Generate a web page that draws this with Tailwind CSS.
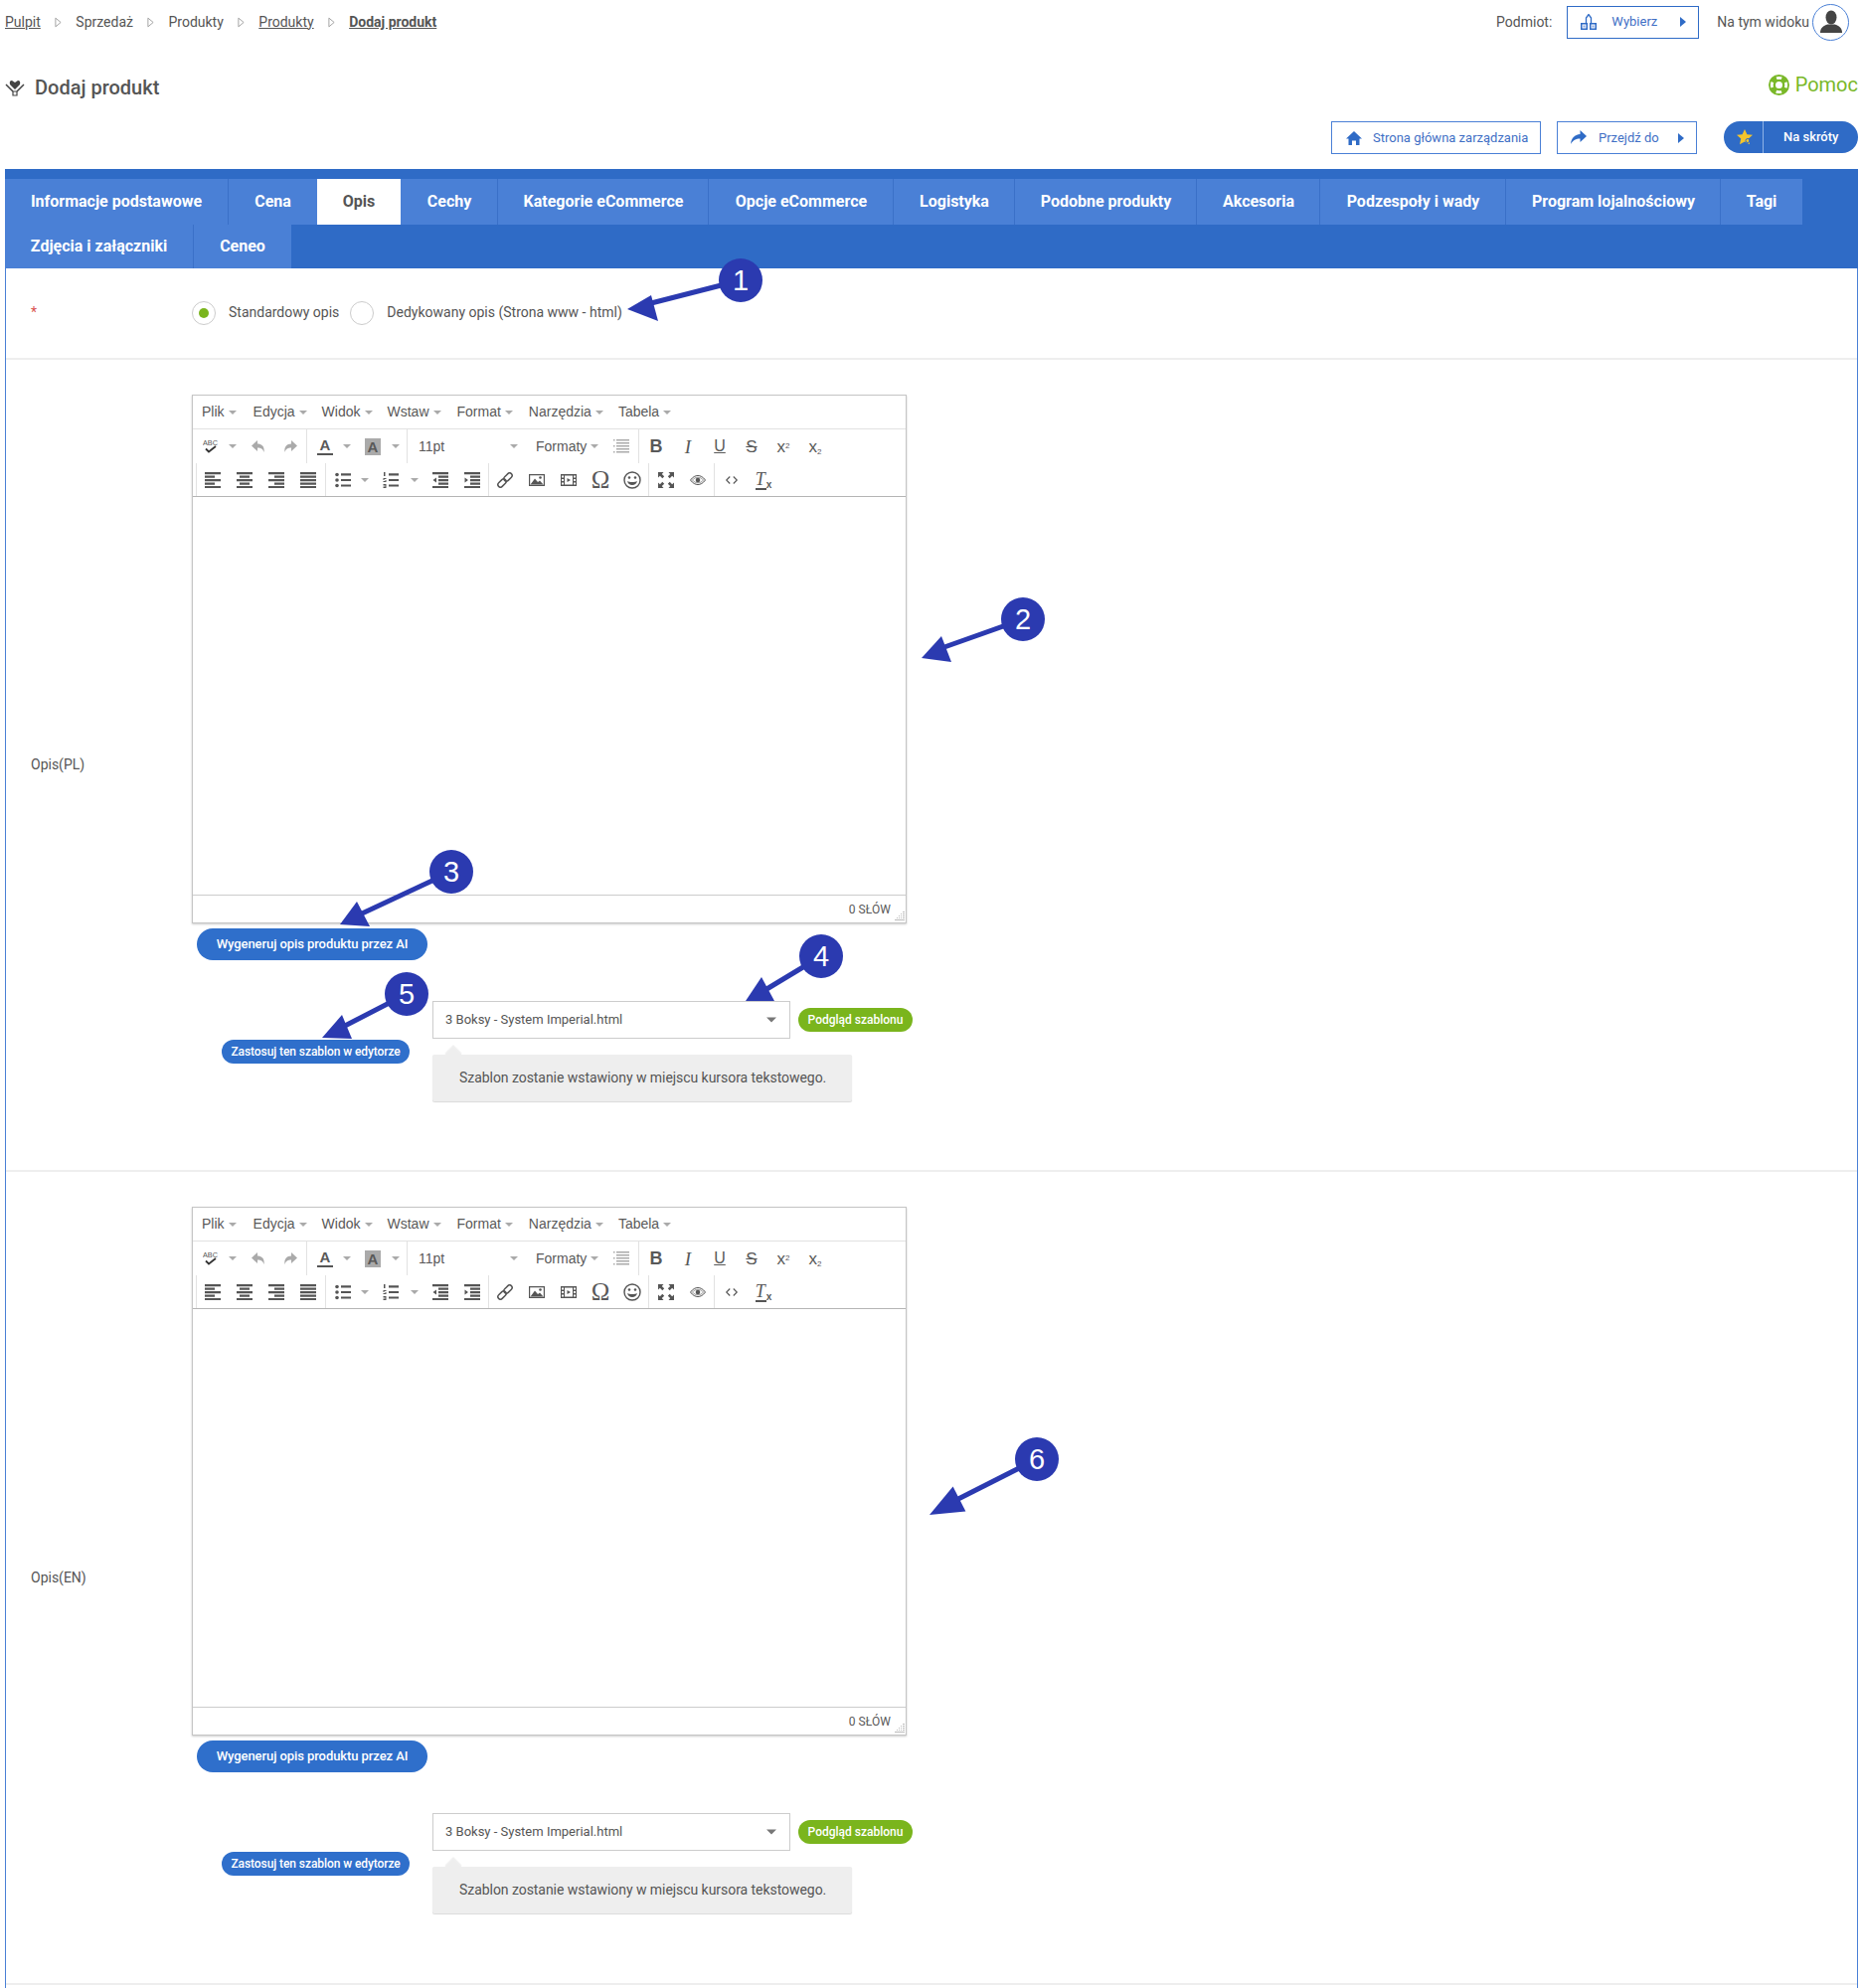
<!DOCTYPE html>
<html lang="pl">
<head>
<meta charset="utf-8">
<title>Dodaj produkt</title>
<script src="https://cdn.jsdelivr.net/npm/@tailwindcss/browser@4"></script>
</head>
<body class="relative h-[2000px] w-[1871px] overflow-hidden bg-white font-['Roboto',sans-serif] text-[#555]">
<svg class="hidden">
<symbol id="caret" viewBox="0 0 8 4"><path d="M0 0h8L4 4z"/></symbol>
<symbol id="bc" viewBox="0 0 8 11"><path d="M1 .5v10L7 5.500z" fill="#fff" stroke="#999"/></symbol>
<symbol id="grip" viewBox="0 0 10 9"><path d="M8 0h2v1H8zM6 2h1v1H6zM8 2h2v1H8zM4 4h1v1H4zM6 4h1v1H6zM8 4h2v1H8zM2 6h1v1H2zM4 6h1v1H4zM6 6h1v1H6zM8 6h2v1H8zM0 8h10v1H0z"/></symbol>
<symbol id="al" viewBox="0 0 16 16"><path d="M0 0h16v2.200H0zM0 3.500h10v2.200H0zM0 7h16v2.200H0zM0 10.500h10v2.200H0zM0 14h16v2H0z"/></symbol>
<symbol id="ac" viewBox="0 0 16 16"><path d="M0 0h16v2.200H0zM3 3.500h10v2.200H3zM0 7h16v2.200H0zM3 10.500h10v2.200H3zM0 14h16v2H0z"/></symbol>
<symbol id="ar" viewBox="0 0 16 16"><path d="M0 0h16v2.200H0zM6 3.500h10v2.200H6zM0 7h16v2.200H0zM6 10.500h10v2.200H6zM0 14h16v2H0z"/></symbol>
<symbol id="aj" viewBox="0 0 16 16"><path d="M0 0h16v2.200H0zM0 3.500h16v2.200H0zM0 7h16v2.200H0zM0 10.500h16v2.200H0zM0 14h16v2H0z"/></symbol>
<symbol id="ul" viewBox="0 0 16 16"><circle cx="2" cy="2.500" r="1.800"/><circle cx="2" cy="8" r="1.800"/><circle cx="2" cy="13.500" r="1.800"/><path d="M6 1.300h10v2.200H6zM6 6.900h10v2.200H6zM6 12.400h10v2.200H6z"/></symbol>
<symbol id="ol" viewBox="0 0 16 16"><path d="M1 0h1.500v4H1zM.5 6h3v1h-2v1h2v2h-3V9h2V8h-2zM.5 12h3v4h-3v-1h2v-.5h-2v-1h2V13h-2zM6 1.300h10v2.200H6zM6 6.900h10v2.200H6zM6 12.400h10v2.200H6z"/></symbol>
<symbol id="out" viewBox="0 0 16 16"><path d="M0 0h16v2.200H0zM6 3.500h10v2.200H6zM6 7h10v2.200H6zM6 10.500h10v2.200H6zM0 14h16v2H0zM4 5.500v5L.5 8z"/></symbol>
<symbol id="ind" viewBox="0 0 16 16"><path d="M0 0h16v2.200H0zM6 3.500h10v2.200H6zM6 7h10v2.200H6zM6 10.500h10v2.200H6zM0 14h16v2H0zM.5 5.500v5L4 8z"/></symbol>
<symbol id="link" viewBox="0 0 16 16"><g transform="rotate(-45 8 8)" fill="none" stroke="currentColor" stroke-width="1.500"><rect x="-1" y="5.500" width="9.500" height="5" rx="2.500"/><rect x="7.500" y="5.500" width="9.500" height="5" rx="2.500"/></g></symbol>
<symbol id="img" viewBox="0 0 16 16"><path d="M0 2h16v12H0zM1.200 3.200v9.600h13.600V3.200z" fill-rule="evenodd"/><path d="M1.500 12.500l4.500-6 3 3.500 2-1.500 3.500 4z"/><circle cx="11.500" cy="5.500" r="1.300"/></symbol>
<symbol id="med" viewBox="0 0 16 16"><path fill-rule="evenodd" d="M0 2h16v12H0zM4 3.500v9h8v-9zM1 3.500v2h2v-2zM1 7v2h2V7zM1 10.500v2h2v-2zM13 3.500v2h2v-2zM13 7v2h2V7zM13 10.500v2h2v-2z"/><path d="M6.500 6v4L10 8z"/></symbol>
<symbol id="sm" viewBox="0 0 18 18"><circle cx="9" cy="9" r="8" fill="none" stroke="currentColor" stroke-width="1.400"/><circle cx="6" cy="6.500" r="1.300"/><circle cx="12" cy="6.500" r="1.300"/><path d="M4 10c1.200 .6 3 1 5 1s3.800-.4 5-1c-.6 2.500-2.600 4-5 4s-4.400-1.500-5-4z"/></symbol>
<symbol id="fs" viewBox="0 0 16 16"><path d="M0 0h5.500L3.800 1.900 6.200 4.300 4.300 6.200 1.900 3.800 0 5.500zM16 0v5.500l-1.900-1.700-2.400 2.400-1.900-1.900 2.400-2.400L10.500 0zM0 16v-5.500l1.900 1.700 2.400-2.400 1.900 1.900-2.400 2.400L5.500 16zM16 16h-5.500l1.700-1.900-2.400-2.400 1.900-1.900 2.400 2.400 1.900-1.700z"/></symbol>
<symbol id="eye" viewBox="0 0 16 16"><path d="M.5 8C3 4.700 5.500 3.500 8 3.500S13 4.700 15.500 8C13 11.300 10.500 12.500 8 12.500S3 11.300 .5 8z" fill="none" stroke="currentColor"/><path d="M2.500 8C4 6 6 5.300 8 5.300S12 6 13.500 8C12 10 10 10.700 8 10.700S4 10 2.500 8z" fill="none" stroke="currentColor" stroke-width=".6"/><circle cx="8" cy="8" r="2.300"/></symbol>
<symbol id="code" viewBox="0 0 16 16"><path d="M6 4L2 8l4 4M10 4l4 4-4 4" fill="none" stroke="currentColor" stroke-width="1.300"/></symbol>
<symbol id="undo" viewBox="0 0 16 16"><path d="M7 2L1 7.500 7 13V9.500c3.500 0 5.300 1 6.500 4.500 .9-5.500-2-8.500-6.500-8.500z"/></symbol>
<symbol id="redo" viewBox="0 0 16 16"><path d="M9 2l6 5.500L9 13V9.500c-3.500 0-5.300 1-6.500 4.500-.9-5.500 2-8.500 6.500-8.500z"/></symbol>
<symbol id="spell" viewBox="0 0 16 16"><text x="0" y="6.800" font-family="Liberation Sans" font-size="7.500" textLength="15" lengthAdjust="spacingAndGlyphs">ABC</text><path d="M3 10.500l3 3 7-5.500" fill="none" stroke="#333" stroke-width="1.800"/></symbol>
<symbol id="lines" viewBox="0 0 16 16"><path d="M0 1h1.500v1.500H0zM3 1h13v1.500H3zM3 4h13v1.500H3zM0 7h1.500v1.500H0zM3 7h13v1.500H3zM3 10h13v1.500H3zM0 13h1.500v1.500H0zM3 13h13v1.500H3z"/></symbol>
</svg>

<div class="flex h-[44px] items-center justify-between pl-[5px] pr-[11px] text-[14px]">
  <nav class="flex items-center">
    <a class="underline">Pulpit</a><svg class="ml-[14px] mr-[14.500px] h-[11px] w-[7px]"><use href="#bc"/></svg>
    <span>Sprzedaż</span><svg class="ml-[14px] mr-[14.500px] h-[11px] w-[7px]"><use href="#bc"/></svg>
    <span>Produkty</span><svg class="ml-[14px] mr-[14.500px] h-[11px] w-[7px]"><use href="#bc"/></svg>
    <a class="underline">Produkty</a><svg class="ml-[14px] mr-[14.500px] h-[11px] w-[7px]"><use href="#bc"/></svg>
    <a class="font-bold underline">Dodaj produkt</a>
  </nav>
  <div class="flex items-center">
    <span>Podmiot:</span>
    <button class="relative ml-[15px] flex h-[33px] w-[133px] items-center border border-[#2f6bc6] pl-[13px] text-[13px] text-[#3f6fc5]">
      <svg class="h-[16px] w-[16px]" viewBox="0 0 16 16"><path d="M5.500 9V4L8 .5 10.500 4v5" fill="none" stroke="#2f6bc6" stroke-width="1.300"/><path fill-rule="evenodd" fill="#2f6bc6" d="M0 9h7v7H0zM1.500 10.500v4h4v-4zM9 9h7v7H9zM10.500 10.500v4h4v-4z"/><path d="M2.500 11.500h2v2h-2zM11.500 11.500h2v2h-2z" fill="#8aa8df"/></svg>
      <span class="ml-[15px]">Wybierz</span>
      <span class="ml-auto mr-[12px] h-0 w-0 border-y-[5px] border-l-[6px] border-y-transparent border-l-[#2f6bc6]"></span>
    </button>
    <span class="ml-[18px]">Na tym widoku</span>
    <span class="ml-[3px] flex h-[37px] w-[37px] items-center justify-center rounded-full border border-[#4a80d6]">
      <svg class="h-[24px] w-[22px] fill-[#444]" viewBox="0 0 22 24"><ellipse cx="11" cy="7.500" rx="5.500" ry="7"/><path d="M0 23c0-5 3-7 7.500-8.500h7C19 16 22 18 22 23z"/></svg>
    </span>
  </div>
</div>

<div class="flex h-[78px] items-center justify-between pl-[5px] pr-[2px]">
  <h1 class="flex items-center pt-[10px] text-[20px] font-medium">
    <svg class="mr-[10px] h-[18px] w-[20px]" viewBox="0 0 20 18"><path d="M10 11L5 6Q4 2 7 2L10 4 13 2Q16 2 15 6z" fill="#444"/><path d="M1 6L8 13M19 6L12 13" fill="none" stroke="#444" stroke-width="1.500"/><path d="M8 13h4v4H8z" fill="none" stroke="#444" stroke-width="1.200"/></svg>
    Dodaj produkt
  </h1>
  <div class="mt-[4px] flex items-center text-[20px] text-[#7ab829]">
    <svg class="mr-[6px] h-[21px] w-[21px]" viewBox="0 0 21 21"><circle cx="10.500" cy="10.500" r="10.500" fill="#7ab829"/><circle cx="10.500" cy="10.500" r="7.200" fill="none" stroke="#fff" stroke-width="2.800" stroke-dasharray="5.500 5.810" stroke-dashoffset="2.750" transform="rotate(-90 10.500 10.500)"/><circle cx="10.500" cy="10.500" r="3.500" fill="#fff"/></svg>
    Pomoc
  </div>
</div>

<div class="flex h-[48px] items-start justify-end pr-[2px] text-[13px]">
  <button class="flex h-[33px] w-[211px] items-center border border-[#4a80d6] pl-[14px] text-[#3f6fc5]">
    <svg class="h-[16px] w-[16px] fill-[#2f6bc6]" viewBox="0 0 16 16"><path d="M8 1l8 7.500h-2.500V15H10v-4.500H6V15H2.500V8.500H0z"/></svg>
    <span class="ml-[11px]">Strona główna zarządzania</span>
  </button>
  <button class="ml-[16px] flex h-[33px] w-[141px] items-center border border-[#4a80d6] pl-[13px] text-[#3f6fc5]">
    <svg class="h-[15px] w-[16px] fill-[#2f6bc6]" viewBox="0 0 16 15"><path d="M9.500 0L16 6l-6.500 6V8.500C5 8.500 2.500 10 0 14c.5-6 4-9.500 9.500-10z"/></svg>
    <span class="ml-[12px]">Przejdź do</span>
    <span class="ml-auto mr-[12px] h-0 w-0 border-y-[5px] border-l-[6px] border-y-transparent border-l-[#2f6bc6]"></span>
  </button>
  <div class="ml-[27px] flex h-[32px] w-[135px] items-center rounded-full bg-[#2f6bc6] font-medium text-white">
    <span class="flex h-full w-[40px] items-center justify-center border-r border-r-[#8fb2e6]">
      <svg class="ml-[2px] h-[16px] w-[16px]" viewBox="0 0 16 16"><path d="M8 0l2.400 5.200 5.600.6-4.200 3.800 1.200 5.600L8 12.400 3 15.200l1.200-5.600L0 5.800l5.600-.6z" fill="#f5c52c"/><circle cx="11" cy="11.500" r="2" fill="none" stroke="#2f6bc6"/></svg>
    </span>
    <span class="ml-[20px]">Na skróty</span>
  </div>
</div>

<main class="mx-[5px] h-[1830px] w-[1864px] border-x border-x-[#4a80d6]">
  <div class="-mx-px flex flex-wrap bg-[#2f6bc6] pr-[56px] pt-[10px] text-[16px] font-bold text-white">
    <a class="flex h-[46px] w-[225px] items-center justify-center border-r border-r-[#3a70c8] bg-[#4a80d6]">Informacje podstawowe</a>
    <a class="flex h-[46px] w-[89px] items-center justify-center bg-[#4a80d6]">Cena</a>
    <a class="flex h-[46px] w-[84px] items-center justify-center bg-white text-[#555]">Opis</a>
    <a class="flex h-[46px] w-[98px] items-center justify-center border-r border-r-[#3a70c8] bg-[#4a80d6] pl-px">Cechy</a>
    <a class="flex h-[46px] w-[212px] items-center justify-center border-r border-r-[#3a70c8] bg-[#4a80d6] pl-px">Kategorie eCommerce</a>
    <a class="flex h-[46px] w-[186px] items-center justify-center border-r border-r-[#3a70c8] bg-[#4a80d6] pl-px">Opcje eCommerce</a>
    <a class="flex h-[46px] w-[122px] items-center justify-center border-r border-r-[#3a70c8] bg-[#4a80d6] pl-px">Logistyka</a>
    <a class="flex h-[46px] w-[183px] items-center justify-center border-r border-r-[#3a70c8] bg-[#4a80d6] pl-px">Podobne produkty</a>
    <a class="flex h-[46px] w-[124px] items-center justify-center border-r border-r-[#3a70c8] bg-[#4a80d6] pl-px">Akcesoria</a>
    <a class="flex h-[46px] w-[187px] items-center justify-center border-r border-r-[#3a70c8] bg-[#4a80d6] pl-px">Podzespoły i wady</a>
    <a class="flex h-[46px] w-[216px] items-center justify-center border-r border-r-[#3a70c8] bg-[#4a80d6] pl-px">Program lojalnościowy</a>
    <a class="flex h-[46px] w-[82px] items-center justify-center bg-[#4a80d6]">Tagi</a>
    <a class="flex h-[44px] w-[190px] items-center justify-center border-r border-r-[#3a70c8] bg-[#4a80d6]">Zdjęcia i załączniki</a>
    <a class="flex h-[44px] w-[98px] items-center justify-center bg-[#4a80d6]">Ceneo</a>
  </div>

  <section class="flex h-[92px] items-center border-b-2 border-b-[#eee] pb-px text-[14px]">
    <span class="w-[187px] pl-[25px] text-[#d9534f]">*</span>
    <span class="flex h-[24px] w-[24px] items-center justify-center rounded-full border border-[#ccc]"><span class="h-[10px] w-[10px] rounded-full bg-[#7ab51d]"></span></span>
    <span class="ml-[13px]">Standardowy opis</span>
    <span class="ml-[11px] h-[24px] w-[24px] rounded-full border border-[#ccc]"></span>
    <span class="ml-[13px]">Dedykowany opis (Strona www - html)</span>
  </section>

  <section class="flex h-[817px] items-center border-b-2 border-b-[#eee]">
    <div class="w-[187px] pl-[25px] text-[14px]">Opis(PL)</div>
    <div class="flex h-full flex-col pt-[35px]">
      <div class="relative flex h-[532px] w-[719px] flex-col border border-[#c5c5c5] shadow-[0_1px_2px_rgba(0,0,0,0.2)] font-['Liberation_Sans',sans-serif] text-[#595959]">
        <div class="flex h-[34px] shrink-0 items-center border-b border-b-[#e2e2e2] pl-[9px] text-[14px]">
          <span>Plik</span><svg class="ml-[4px] h-[4px] w-[8px] fill-[#aaa]"><use href="#caret"/></svg>
          <span class="ml-[17px]">Edycja</span><svg class="ml-[4px] h-[4px] w-[8px] fill-[#aaa]"><use href="#caret"/></svg>
          <span class="ml-[15px]">Widok</span><svg class="ml-[4px] h-[4px] w-[8px] fill-[#aaa]"><use href="#caret"/></svg>
          <span class="ml-[15px]">Wstaw</span><svg class="ml-[4px] h-[4px] w-[8px] fill-[#aaa]"><use href="#caret"/></svg>
          <span class="ml-[16px]">Format</span><svg class="ml-[4px] h-[4px] w-[8px] fill-[#aaa]"><use href="#caret"/></svg>
          <span class="ml-[16px]">Narzędzia</span><svg class="ml-[4px] h-[4px] w-[8px] fill-[#aaa]"><use href="#caret"/></svg>
          <span class="ml-[15px]">Tabela</span><svg class="ml-[4px] h-[4px] w-[8px] fill-[#aaa]"><use href="#caret"/></svg>
        </div>
        <div class="flex h-[34px] shrink-0 items-center pl-[2px]">
          <span class="flex w-[32px] justify-center"><svg class="h-[16px] w-[16px] fill-[#555]"><use href="#spell"/></svg></span>
          <span class="flex w-[12px] justify-center"><svg class="h-[4px] w-[8px] fill-[#aaa]"><use href="#caret"/></svg></span>
          <span class="ml-[4px] flex w-[32px] justify-center"><svg class="h-[16px] w-[16px] fill-[#aaa]"><use href="#undo"/></svg></span>
          <span class="flex w-[32px] justify-center"><svg class="h-[16px] w-[16px] fill-[#aaa]"><use href="#redo"/></svg></span>
          <span class="h-full w-px bg-[#e2e2e2]"></span>
          <span class="ml-[2px] flex w-[32px] flex-col items-center"><span class="w-[16px] border-b-2 border-b-[#555] text-center text-[15px] font-bold leading-[16px]">A</span></span>
          <span class="flex w-[12px] justify-center"><svg class="h-[4px] w-[8px] fill-[#aaa]"><use href="#caret"/></svg></span>
          <span class="ml-[4px] flex w-[32px] justify-center"><span class="h-[17px] w-[16px] bg-[#aaa] text-center text-[15px] font-bold leading-[17px]">A</span></span>
          <span class="flex w-[14px] justify-center"><svg class="h-[4px] w-[8px] fill-[#aaa]"><use href="#caret"/></svg></span>
          <span class="ml-[4px] h-full w-px bg-[#e2e2e2]"></span>
          <span class="flex w-[115px] items-center pl-[11px] pr-[4px] text-[14px]">11pt<svg class="ml-auto h-[4px] w-[8px] fill-[#aaa]"><use href="#caret"/></svg></span>
          <span class="flex w-[84px] items-center pl-[14px] text-[14px]">Formaty<svg class="ml-[4px] h-[4px] w-[8px] fill-[#aaa]"><use href="#caret"/></svg></span>
          <span class="flex w-[32px] justify-center"><svg class="h-[16px] w-[16px] fill-[#aaa]"><use href="#lines"/></svg></span>
          <span class="ml-px h-full w-px bg-[#e2e2e2]"></span>
          <span class="ml-px flex w-[32px] justify-center text-[18px] font-bold leading-none">B</span>
          <span class="flex w-[32px] justify-center font-['Liberation_Serif',serif] text-[19px] italic leading-none">I</span>
          <span class="flex w-[32px] justify-center text-[16px] leading-none underline">U</span>
          <span class="flex w-[32px] justify-center text-[17px] leading-none line-through">S</span>
          <span class="w-[32px] text-center text-[17px] leading-none">x<sup class="text-[8px]">2</sup></span>
          <span class="w-[32px] text-center text-[17px] leading-none">x<sub class="text-[8px]">2</sub></span>
        </div>
        <div class="flex h-[34px] shrink-0 items-center border-b border-b-[#b5b5b5] pl-[3px]">
          <span class="h-full w-px bg-[#e2e2e2]"></span>
          <span class="flex w-[32px] justify-center"><svg class="h-[16px] w-[16px] fill-[#555]"><use href="#al"/></svg></span>
          <span class="flex w-[32px] justify-center"><svg class="h-[16px] w-[16px] fill-[#555]"><use href="#ac"/></svg></span>
          <span class="flex w-[32px] justify-center"><svg class="h-[16px] w-[16px] fill-[#555]"><use href="#ar"/></svg></span>
          <span class="flex w-[32px] justify-center"><svg class="h-[16px] w-[16px] fill-[#555]"><use href="#aj"/></svg></span>
          <span class="ml-px h-full w-px bg-[#e2e2e2]"></span>
          <span class="ml-px flex w-[32px] justify-center"><svg class="h-[16px] w-[16px] fill-[#555]"><use href="#ul"/></svg></span>
          <span class="flex w-[12px] justify-center"><svg class="h-[4px] w-[8px] fill-[#aaa]"><use href="#caret"/></svg></span>
          <span class="ml-[4px] flex w-[32px] justify-center"><svg class="h-[16px] w-[16px] fill-[#555]"><use href="#ol"/></svg></span>
          <span class="flex w-[16px] justify-center"><svg class="h-[4px] w-[8px] fill-[#aaa]"><use href="#caret"/></svg></span>
          <span class="ml-[2px] flex w-[32px] justify-center"><svg class="h-[16px] w-[16px] fill-[#555]"><use href="#out"/></svg></span>
          <span class="flex w-[32px] justify-center"><svg class="h-[16px] w-[16px] fill-[#555]"><use href="#ind"/></svg></span>
          <span class="h-full w-px bg-[#e2e2e2]"></span>
          <span class="flex w-[32px] justify-center text-[#555]"><svg class="h-[16px] w-[16px]"><use href="#link"/></svg></span>
          <span class="flex w-[32px] justify-center"><svg class="h-[16px] w-[16px] fill-[#555]"><use href="#img"/></svg></span>
          <span class="flex w-[32px] justify-center"><svg class="h-[16px] w-[16px] fill-[#555]"><use href="#med"/></svg></span>
          <span class="flex w-[32px] justify-center font-['Liberation_Serif',serif] text-[25px] leading-none">Ω</span>
          <span class="flex w-[32px] justify-center text-[#555]"><svg class="h-[18px] w-[18px] fill-[#555]"><use href="#sm"/></svg></span>
          <span class="h-full w-px bg-[#e2e2e2]"></span>
          <span class="ml-px flex w-[32px] justify-center"><svg class="h-[16px] w-[16px] fill-[#555]"><use href="#fs"/></svg></span>
          <span class="flex w-[32px] justify-center text-[#555]"><svg class="h-[16px] w-[16px] fill-[#555]"><use href="#eye"/></svg></span>
          <span class="h-full w-px bg-[#e2e2e2]"></span>
          <span class="ml-px flex w-[32px] justify-center text-[#555]"><svg class="h-[14px] w-[14px]"><use href="#code"/></svg></span>
          <span class="flex w-[32px] justify-center text-[18px] leading-none"><span class="border-b-2 border-b-[#555] pr-[1px] font-['Liberation_Serif',serif] italic">T</span><span class="self-end text-[10px] font-bold">x</span></span>
        </div>
        <div class="flex-1"></div>
        <div class="flex h-[28px] shrink-0 items-center justify-end border-t border-t-[#ccc] pr-[15px] font-['Roboto',sans-serif] text-[12px]">0 SŁÓW</div>
        <svg class="absolute bottom-[2px] right-[1px] h-[9px] w-[10px] fill-[#bbb]"><use href="#grip"/></svg>
      </div>
      <button class="ml-[5px] mt-[5px] flex h-[32px] w-[232px] items-center justify-center rounded-full bg-[#2f6fcb] text-[13px] font-medium tracking-[-0.08px] text-white">Wygeneruj opis produktu przez AI</button>
      <div class="mt-[41px] flex h-[101px] items-center">
        <div class="w-[242px] pl-[30px]"><button class="flex h-[24px] w-[189px] items-center justify-center rounded-full bg-[#2f6fcb] text-[12px] font-medium tracking-[-0.08px] text-white">Zastosuj ten szablon w edytorze</button></div>
        <div class="flex h-full flex-col">
          <div class="flex">
            <div class="flex h-[38px] w-[360px] items-center border border-[#ccc] pl-[12px] pr-[13px] text-[13px]">3 Boksy - System Imperial.html<svg class="ml-auto h-[6px] w-[10px] fill-[#777]"><use href="#caret"/></svg></div>
            <button class="ml-[8px] mt-[7px] flex h-[24px] w-[115px] items-center justify-center rounded-full bg-[#7ab51d] text-[12px] font-medium text-white">Podgląd szablonu</button>
          </div>
          <div class="relative mt-[16px] flex h-[47px] w-[422px] items-center rounded-[2px] bg-[#eee] pl-[27px] text-[14px] tracking-[-0.05px] shadow-[0_1px_1px_rgba(0,0,0,0.15)]">Szablon zostanie wstawiony w miejscu kursora tekstowego.<span class="absolute -top-[6px] left-[15px] h-[12px] w-[12px] rotate-45 bg-[#eee] shadow-[-1px_-1px_1px_rgba(0,0,0,0.06)]"></span></div>
        </div>
      </div>
    </div>
  </section>

  <section class="flex h-[818px] items-center border-b-2 border-b-[#eee]">
    <div class="w-[187px] pl-[25px] text-[14px]">Opis(EN)</div>
    <div class="flex h-full flex-col pt-[35px]">
      <div class="relative flex h-[532px] w-[719px] flex-col border border-[#c5c5c5] shadow-[0_1px_2px_rgba(0,0,0,0.2)] font-['Liberation_Sans',sans-serif] text-[#595959]">
        <div class="flex h-[34px] shrink-0 items-center border-b border-b-[#e2e2e2] pl-[9px] text-[14px]">
          <span>Plik</span><svg class="ml-[4px] h-[4px] w-[8px] fill-[#aaa]"><use href="#caret"/></svg>
          <span class="ml-[17px]">Edycja</span><svg class="ml-[4px] h-[4px] w-[8px] fill-[#aaa]"><use href="#caret"/></svg>
          <span class="ml-[15px]">Widok</span><svg class="ml-[4px] h-[4px] w-[8px] fill-[#aaa]"><use href="#caret"/></svg>
          <span class="ml-[15px]">Wstaw</span><svg class="ml-[4px] h-[4px] w-[8px] fill-[#aaa]"><use href="#caret"/></svg>
          <span class="ml-[16px]">Format</span><svg class="ml-[4px] h-[4px] w-[8px] fill-[#aaa]"><use href="#caret"/></svg>
          <span class="ml-[16px]">Narzędzia</span><svg class="ml-[4px] h-[4px] w-[8px] fill-[#aaa]"><use href="#caret"/></svg>
          <span class="ml-[15px]">Tabela</span><svg class="ml-[4px] h-[4px] w-[8px] fill-[#aaa]"><use href="#caret"/></svg>
        </div>
        <div class="flex h-[34px] shrink-0 items-center pl-[2px]">
          <span class="flex w-[32px] justify-center"><svg class="h-[16px] w-[16px] fill-[#555]"><use href="#spell"/></svg></span>
          <span class="flex w-[12px] justify-center"><svg class="h-[4px] w-[8px] fill-[#aaa]"><use href="#caret"/></svg></span>
          <span class="ml-[4px] flex w-[32px] justify-center"><svg class="h-[16px] w-[16px] fill-[#aaa]"><use href="#undo"/></svg></span>
          <span class="flex w-[32px] justify-center"><svg class="h-[16px] w-[16px] fill-[#aaa]"><use href="#redo"/></svg></span>
          <span class="h-full w-px bg-[#e2e2e2]"></span>
          <span class="ml-[2px] flex w-[32px] flex-col items-center"><span class="w-[16px] border-b-2 border-b-[#555] text-center text-[15px] font-bold leading-[16px]">A</span></span>
          <span class="flex w-[12px] justify-center"><svg class="h-[4px] w-[8px] fill-[#aaa]"><use href="#caret"/></svg></span>
          <span class="ml-[4px] flex w-[32px] justify-center"><span class="h-[17px] w-[16px] bg-[#aaa] text-center text-[15px] font-bold leading-[17px]">A</span></span>
          <span class="flex w-[14px] justify-center"><svg class="h-[4px] w-[8px] fill-[#aaa]"><use href="#caret"/></svg></span>
          <span class="ml-[4px] h-full w-px bg-[#e2e2e2]"></span>
          <span class="flex w-[115px] items-center pl-[11px] pr-[4px] text-[14px]">11pt<svg class="ml-auto h-[4px] w-[8px] fill-[#aaa]"><use href="#caret"/></svg></span>
          <span class="flex w-[84px] items-center pl-[14px] text-[14px]">Formaty<svg class="ml-[4px] h-[4px] w-[8px] fill-[#aaa]"><use href="#caret"/></svg></span>
          <span class="flex w-[32px] justify-center"><svg class="h-[16px] w-[16px] fill-[#aaa]"><use href="#lines"/></svg></span>
          <span class="ml-px h-full w-px bg-[#e2e2e2]"></span>
          <span class="ml-px flex w-[32px] justify-center text-[18px] font-bold leading-none">B</span>
          <span class="flex w-[32px] justify-center font-['Liberation_Serif',serif] text-[19px] italic leading-none">I</span>
          <span class="flex w-[32px] justify-center text-[16px] leading-none underline">U</span>
          <span class="flex w-[32px] justify-center text-[17px] leading-none line-through">S</span>
          <span class="w-[32px] text-center text-[17px] leading-none">x<sup class="text-[8px]">2</sup></span>
          <span class="w-[32px] text-center text-[17px] leading-none">x<sub class="text-[8px]">2</sub></span>
        </div>
        <div class="flex h-[34px] shrink-0 items-center border-b border-b-[#b5b5b5] pl-[3px]">
          <span class="h-full w-px bg-[#e2e2e2]"></span>
          <span class="flex w-[32px] justify-center"><svg class="h-[16px] w-[16px] fill-[#555]"><use href="#al"/></svg></span>
          <span class="flex w-[32px] justify-center"><svg class="h-[16px] w-[16px] fill-[#555]"><use href="#ac"/></svg></span>
          <span class="flex w-[32px] justify-center"><svg class="h-[16px] w-[16px] fill-[#555]"><use href="#ar"/></svg></span>
          <span class="flex w-[32px] justify-center"><svg class="h-[16px] w-[16px] fill-[#555]"><use href="#aj"/></svg></span>
          <span class="ml-px h-full w-px bg-[#e2e2e2]"></span>
          <span class="ml-px flex w-[32px] justify-center"><svg class="h-[16px] w-[16px] fill-[#555]"><use href="#ul"/></svg></span>
          <span class="flex w-[12px] justify-center"><svg class="h-[4px] w-[8px] fill-[#aaa]"><use href="#caret"/></svg></span>
          <span class="ml-[4px] flex w-[32px] justify-center"><svg class="h-[16px] w-[16px] fill-[#555]"><use href="#ol"/></svg></span>
          <span class="flex w-[16px] justify-center"><svg class="h-[4px] w-[8px] fill-[#aaa]"><use href="#caret"/></svg></span>
          <span class="ml-[2px] flex w-[32px] justify-center"><svg class="h-[16px] w-[16px] fill-[#555]"><use href="#out"/></svg></span>
          <span class="flex w-[32px] justify-center"><svg class="h-[16px] w-[16px] fill-[#555]"><use href="#ind"/></svg></span>
          <span class="h-full w-px bg-[#e2e2e2]"></span>
          <span class="flex w-[32px] justify-center text-[#555]"><svg class="h-[16px] w-[16px]"><use href="#link"/></svg></span>
          <span class="flex w-[32px] justify-center"><svg class="h-[16px] w-[16px] fill-[#555]"><use href="#img"/></svg></span>
          <span class="flex w-[32px] justify-center"><svg class="h-[16px] w-[16px] fill-[#555]"><use href="#med"/></svg></span>
          <span class="flex w-[32px] justify-center font-['Liberation_Serif',serif] text-[25px] leading-none">Ω</span>
          <span class="flex w-[32px] justify-center text-[#555]"><svg class="h-[18px] w-[18px] fill-[#555]"><use href="#sm"/></svg></span>
          <span class="h-full w-px bg-[#e2e2e2]"></span>
          <span class="ml-px flex w-[32px] justify-center"><svg class="h-[16px] w-[16px] fill-[#555]"><use href="#fs"/></svg></span>
          <span class="flex w-[32px] justify-center text-[#555]"><svg class="h-[16px] w-[16px] fill-[#555]"><use href="#eye"/></svg></span>
          <span class="h-full w-px bg-[#e2e2e2]"></span>
          <span class="ml-px flex w-[32px] justify-center text-[#555]"><svg class="h-[14px] w-[14px]"><use href="#code"/></svg></span>
          <span class="flex w-[32px] justify-center text-[18px] leading-none"><span class="border-b-2 border-b-[#555] pr-[1px] font-['Liberation_Serif',serif] italic">T</span><span class="self-end text-[10px] font-bold">x</span></span>
        </div>
        <div class="flex-1"></div>
        <div class="flex h-[28px] shrink-0 items-center justify-end border-t border-t-[#ccc] pr-[15px] font-['Roboto',sans-serif] text-[12px]">0 SŁÓW</div>
        <svg class="absolute bottom-[2px] right-[1px] h-[9px] w-[10px] fill-[#bbb]"><use href="#grip"/></svg>
      </div>
      <button class="ml-[5px] mt-[5px] flex h-[32px] w-[232px] items-center justify-center rounded-full bg-[#2f6fcb] text-[13px] font-medium tracking-[-0.08px] text-white">Wygeneruj opis produktu przez AI</button>
      <div class="mt-[41px] flex h-[101px] items-center">
        <div class="w-[242px] pl-[30px]"><button class="flex h-[24px] w-[189px] items-center justify-center rounded-full bg-[#2f6fcb] text-[12px] font-medium tracking-[-0.08px] text-white">Zastosuj ten szablon w edytorze</button></div>
        <div class="flex h-full flex-col">
          <div class="flex">
            <div class="flex h-[38px] w-[360px] items-center border border-[#ccc] pl-[12px] pr-[13px] text-[13px]">3 Boksy - System Imperial.html<svg class="ml-auto h-[6px] w-[10px] fill-[#777]"><use href="#caret"/></svg></div>
            <button class="ml-[8px] mt-[7px] flex h-[24px] w-[115px] items-center justify-center rounded-full bg-[#7ab51d] text-[12px] font-medium text-white">Podgląd szablonu</button>
          </div>
          <div class="relative mt-[16px] flex h-[47px] w-[422px] items-center rounded-[2px] bg-[#eee] pl-[27px] text-[14px] tracking-[-0.05px] shadow-[0_1px_1px_rgba(0,0,0,0.15)]">Szablon zostanie wstawiony w miejscu kursora tekstowego.<span class="absolute -top-[6px] left-[15px] h-[12px] w-[12px] rotate-45 bg-[#eee] shadow-[-1px_-1px_1px_rgba(0,0,0,0.06)]"></span></div>
        </div>
      </div>
    </div>
  </section>
</main>

<svg class="pointer-events-none absolute left-0 top-0 h-[2000px] w-[1871px]" viewBox="0 0 1871 2000">
  <g fill="#2b3ab0" stroke="#2b3ab0">
    <path d="M745 282L655 305" stroke-width="5"/><path d="M631 311L655 297 662 323z" stroke="none"/>
    <path d="M1029 623L950 651" stroke-width="5"/><path d="M927 662L947 640 957 666z" stroke="none"/>
    <path d="M454 877L362 920" stroke-width="5"/><path d="M342 930L359 907 372 932z" stroke="none"/>
    <path d="M826 962L768 997" stroke-width="5"/><path d="M750 1007L766 983 779 1007z" stroke="none"/>
    <path d="M409 1000L345 1033" stroke-width="5"/><path d="M324 1044L344 1021 354 1045z" stroke="none"/>
    <path d="M1043 1468L960 1510" stroke-width="5"/><path d="M935 1524L958.600 1495.600 971.400 1520.400z" stroke="none"/>
    <g stroke="none"><circle cx="745" cy="282" r="22"/><circle cx="1029" cy="623" r="22"/><circle cx="454" cy="877" r="22"/><circle cx="826" cy="962" r="22"/><circle cx="409" cy="1000" r="22"/><circle cx="1043" cy="1468" r="22"/></g>
  </g>
  <g fill="#fff" font-family="Liberation Sans" font-size="29" text-anchor="middle">
    <text x="745" y="292">1</text><text x="1029" y="633">2</text><text x="454" y="887">3</text><text x="826" y="972">4</text><text x="409" y="1010">5</text><text x="1043" y="1478">6</text>
  </g>
</svg>
</body>
</html>
